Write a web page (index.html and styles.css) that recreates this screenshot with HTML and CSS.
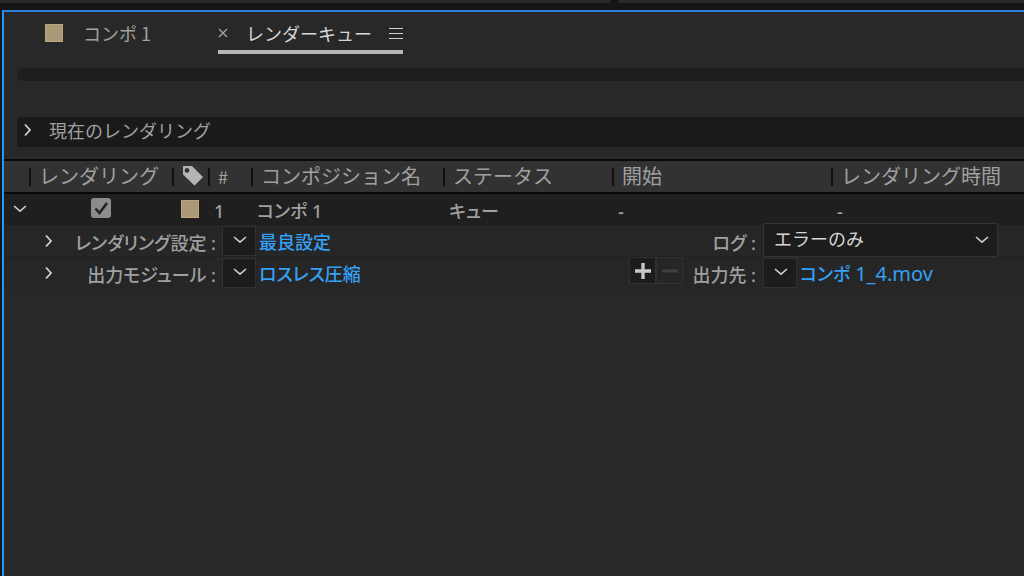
FILE: index.html
```html
<!DOCTYPE html>
<html lang="ja">
<head>
<meta charset="utf-8">
<title>レンダーキュー</title>
<link rel="stylesheet" href="styles.css">
</head>
<body>
<svg class="defs" aria-hidden="true">
  <symbol id="right" viewBox="0 0 10 14"><path d="M2 1.5 7 7 2 12.5" fill="none" stroke="currentColor" stroke-width="1.8"/></symbol>
  <symbol id="down" viewBox="0 0 14 8"><path d="M1 1 7 6.2 13 1" fill="none" stroke="currentColor" stroke-width="1.6"/></symbol>
</svg>
<div class="dock"><div class="dock-panel"></div><div class="dock-panel"></div></div>
<main class="panel">
  <nav class="tabs">
    <a class="tab" href="#comp"><span class="swatch"></span>コンポ 1</a>
    <div class="tab tab-active">
      <button class="icon-button" aria-label="閉じる"><svg width="10" height="10" viewBox="0 0 10 10"><path d="M1 1 9 9M9 1 1 9" stroke="#a6a6a6" stroke-width="1.3"/></svg></button>
      <a class="tab-name" href="#queue">レンダーキュー</a>
      <button class="icon-button" aria-label="パネルメニュー"><svg width="14" height="14" viewBox="0 0 14 14"><path d="M0 2.5H14M0 7.5H14M0 12.5H14" stroke="#d0d0d0" stroke-width="1.2"/></svg></button>
    </div>
  </nav>
  <div class="progress"></div>
  <section class="current">
    <button class="icon-button" aria-label="展開"><svg width="10" height="14"><use href="#right"/></svg></button>
    <h2 class="current-title">現在のレンダリング</h2>
  </section>
  <table class="queue">
    <colgroup>
      <col class="col-toggle"><col class="col-render"><col class="col-tag"><col class="col-number"><col class="col-name"><col class="col-status"><col class="col-start"><col>
    </colgroup>
    <thead>
      <tr>
        <th></th>
        <th><span class="head">レンダリング</span></th>
        <th><span class="head head-tag"><svg width="22" height="22" viewBox="0 0 22 22" role="img" aria-label="ラベル"><path fill="#b4b4b4" fill-rule="evenodd" d="M1.5 1H10L21 12 12.5 20.5 1 9.5V1.5ZM5 3a2.4 2.4 0 1 0 .01 0Z"/></svg></span></th>
        <th><span class="head head-number">#</span></th>
        <th><span class="head">コンポジション名</span></th>
        <th><span class="head">ステータス</span></th>
        <th><span class="head">開始</span></th>
        <th><span class="head">レンダリング時間</span></th>
      </tr>
    </thead>
    <tbody>
      <tr class="item">
        <td class="cell-icon cell-toggle"><button class="icon-button" aria-label="折りたたむ"><svg width="14" height="8"><use href="#down"/></svg></button></td>
        <td class="cell-icon"><input class="check" type="checkbox" aria-label="レンダリング" checked></td>
        <td class="cell-icon"><span class="swatch"></span></td>
        <td class="cell-text">1</td>
        <td class="cell-text">コンポ 1</td>
        <td class="cell-text">キュー</td>
        <td class="cell-text">-</td>
        <td class="cell-text">-</td>
      </tr>
      <tr class="detail">
        <td colspan="8">
          <div class="detail-row">
            <button class="icon-button expand" aria-label="展開"><svg width="10" height="14"><use href="#right"/></svg></button>
            <span class="label">レンダリング設定 :</span>
            <button class="drop" aria-label="レンダリング設定を選択"><svg width="14" height="8"><use href="#down"/></svg></button>
            <a class="value" href="#settings">最良設定</a>
            <span></span>
            <label class="label" for="log">ログ :</label>
            <div class="select-box">
              <select class="select" id="log"><option>エラーのみ</option></select>
              <svg class="select-arrow" width="14" height="8"><use href="#down"/></svg>
            </div>
          </div>
        </td>
      </tr>
      <tr class="detail">
        <td colspan="8">
          <div class="detail-row">
            <button class="icon-button expand" aria-label="展開"><svg width="10" height="14"><use href="#right"/></svg></button>
            <span class="label">出力モジュール :</span>
            <button class="drop" aria-label="出力モジュールを選択"><svg width="14" height="8"><use href="#down"/></svg></button>
            <a class="value" href="#module">ロスレス圧縮</a>
            <div class="steps">
              <button class="step" aria-label="追加"><svg width="18" height="18" viewBox="0 0 18 18"><path d="M9 1V17M1 9H17" stroke="#c8c8c8" stroke-width="3.4"/></svg></button>
              <button class="step step-off" aria-label="削除" disabled><svg width="18" height="18" viewBox="0 0 18 18"><path d="M1 9H17" stroke="#404040" stroke-width="3"/></svg></button>
            </div>
            <span class="label">出力先 :</span>
            <div class="target">
              <button class="drop" aria-label="出力先を選択"><svg width="14" height="8"><use href="#down"/></svg></button>
              <a class="value" href="#output">コンポ <span class="latin">1_4.mov</span></a>
            </div>
          </div>
        </td>
      </tr>
    </tbody>
  </table>
</main>
</body>
</html>
```
FILE: styles.css
```css
* { box-sizing: border-box; }

body {
  margin: 0;
  min-height: 100vh;
  display: flex;
  flex-direction: column;
  background: #151515;
  color: #a0a0a0;
  font-family: "Noto Sans CJK JP", sans-serif;
  font-size: 18px;
  line-height: 24px;
}

a { color: inherit; text-decoration: none; }
svg { display: block; }
.defs { position: absolute; width: 0; height: 0; }

.dock { display: grid; grid-template-columns: 3fr 2fr; gap: 8px; height: 10px; padding-bottom: 7px; }
.dock-panel { background: #292929; }

.panel {
  flex: 1;
  margin-left: 2px;
  border-top: 2px solid #2b7fd9;
  border-left: 2px solid #1e9bff;
  background: #282828;
}

.icon-button { display: inline-flex; padding: 0; border: 0; background: none; color: #d0d0d0; }

.tabs { display: flex; gap: 67px; height: 42px; padding-left: 41px; }
.tab { display: flex; align-items: center; color: #a0a0a0; }
.tab .swatch { margin-right: 20px; }
.tab-active { border-bottom: 4px solid #b8b8b8; padding-top: 4px; }
.tab-name { margin: 0 17px 0 18px; color: #d6d6d6; }

.swatch { display: inline-block; width: 18px; height: 18px; background: #ab9877; border: 1px solid #bda57c; }

.progress { height: 13px; margin: 14px 0 36px 13px; border-radius: 6px 0 0 6px; background: #1e1e1e; }

.current {
  display: flex;
  align-items: center;
  gap: 16px;
  height: 30px;
  margin: 0 0 12px 13px;
  padding: 0 0 4px 6px;
  border-radius: 4px 0 0 0;
  background: #1a1a1a;
}
.current-title { margin: 0; font-size: 18px; font-weight: 400; }

.queue { width: 100%; table-layout: fixed; border-collapse: collapse; }
.queue th, .queue td { padding: 0; text-align: left; vertical-align: middle; }
.queue th { height: 33px; font-weight: 400; font-size: 20px; }
.queue thead tr { background: #323232; border-top: 2px solid #080808; border-bottom: 2px solid #080808; }
.col-toggle { width: 25px; }
.col-render { width: 143px; }
.col-tag { width: 36px; }
.col-number { width: 43px; }
.col-name { width: 192px; }
.col-status { width: 169px; }
.col-start { width: 219px; }

.head { display: flex; align-items: center; height: 18px; padding: 0 0 2px 8px; border-left: 2px solid #111; white-space: nowrap; }
.head-number { font-size: 18px; }

.item { height: 32px; background: #1f1f1f; }
.item, .detail { font-family: "Noto Sans", "Noto Sans CJK JP", sans-serif; }
.item .cell-text { padding: 2px 0 0 6px; font-weight: 500; font-feature-settings: "palt"; }
.item .cell-icon { padding-bottom: 5px; text-align: center; line-height: 20px; }
.item .cell-toggle { padding-left: 6px; }
.cell-icon .swatch, .cell-icon .icon-button { vertical-align: middle; }

.check {
  appearance: none;
  width: 20px;
  height: 20px;
  margin: 0;
  border-radius: 3px;
  vertical-align: middle;
  background: #8c8c8c url("data:image/svg+xml,%3Csvg xmlns='http://www.w3.org/2000/svg' viewBox='0 0 20 20'%3E%3Cpath d='M4.5 10.5 8.5 15 16 5' fill='none' stroke='%23222' stroke-width='2.6'/%3E%3C/svg%3E");
}

.detail { border-bottom: 1px solid #212121; background: #262626; }
.detail:last-child { border-bottom-color: #262626; }
.detail-row {
  display: grid;
  grid-template-columns: 50px 162px 40px 373px 56px 71px 1fr;
  align-items: center;
  height: 31px;
  font-feature-settings: "palt";
}
.expand { justify-self: end; }
.label { justify-self: end; padding-top: 4px; font-weight: 500; white-space: nowrap; }
.detail-row > .drop { justify-self: end; }
.value { padding: 2px 0 0 3px; color: #35a0f5; font-weight: 500; white-space: nowrap; }
.latin { font-size: 20px; font-weight: 400; }

.drop {
  display: flex;
  justify-content: center;
  align-items: center;
  width: 34px;
  height: 30px;
  padding: 0 0 2px 2px;
  border: 1px solid #313131;
  background: #1c1c1c;
  color: #d0d0d0;
}

.steps { display: flex; align-self: start; }
.step {
  display: flex;
  justify-content: center;
  align-items: center;
  width: 27px;
  height: 27px;
  padding: 0;
  border: 1px solid #313131;
  background: #1c1c1c;
}
.step-off { background: #262626; }

.target { display: flex; align-items: center; padding-left: 7px; }
.select-box { display: grid; align-items: center; margin: -3px 26px -1px 7px; }
.select {
  grid-area: 1 / 1;
  appearance: none;
  width: 100%;
  height: 34px;
  padding: 0 30px 2px 10px;
  border: 1px solid #343434;
  border-radius: 0;
  background: #1c1c1c;
  color: #d6d6d6;
  font: inherit;
  font-feature-settings: normal;
}
.select-arrow { grid-area: 1 / 1; justify-self: end; margin-right: 9px; color: #d0d0d0; pointer-events: none; }
```
